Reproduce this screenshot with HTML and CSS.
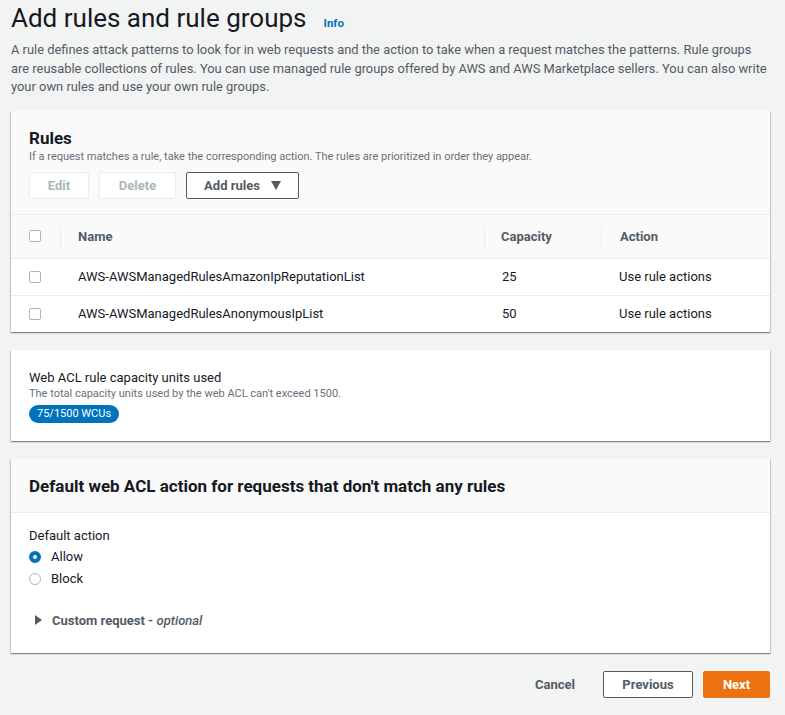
FILE: index.html
```html
<!DOCTYPE html>
<html>
<head>
<meta charset="utf-8">
<link rel="stylesheet" href="styles.css">
</head>
<body>
<main class="page">
  <div class="page-head">
    <h1 class="title">Add rules and rule groups</h1>
    <a class="info">Info</a>
  </div>
  <p class="desc">A rule defines attack patterns to look for in web requests and the action to take when a request matches the patterns. Rule groups<br>are reusable collections of rules. You can use managed rule groups offered by AWS and AWS Marketplace sellers. You can also write<br>your own rules and use your own rule groups.</p>

  <section class="panel rules">
    <div class="rules-head">
      <h2 class="h2">Rules</h2>
      <div class="sub">If a request matches a rule, take the corresponding action. The rules are prioritized in order they appear.</div>
      <div class="actions">
        <button class="btn disabled edit">Edit</button>
        <button class="btn disabled delete">Delete</button>
        <button class="btn normal add">Add rules <span class="tri"></span></button>
      </div>
    </div>
    <div class="table">
      <div class="tr thead">
        <div class="cell chk"><span class="checkbox"></span></div>
        <div class="cell th">Name</div>
        <div class="cell th">Capacity</div>
        <div class="cell th">Action</div>
      </div>
      <div class="tr">
        <div class="cell chk"><span class="checkbox"></span></div>
        <div class="cell">AWS-AWSManagedRulesAmazonIpReputationList</div>
        <div class="cell">25</div>
        <div class="cell">Use rule actions</div>
      </div>
      <div class="tr">
        <div class="cell chk"><span class="checkbox"></span></div>
        <div class="cell">AWS-AWSManagedRulesAnonymousIpList</div>
        <div class="cell">50</div>
        <div class="cell">Use rule actions</div>
      </div>
    </div>
  </section>

  <section class="panel wcu">
    <div class="label">Web ACL rule capacity units used</div>
    <div class="sub">The total capacity units used by the web ACL can't exceed 1500.</div>
    <span class="badge">75/1500 WCUs</span>
  </section>

  <section class="panel default">
    <div class="default-head">
      <h2 class="h2">Default web ACL action for requests that don't match any rules</h2>
    </div>
    <div class="default-body">
      <div class="label">Default action</div>
      <div class="radios">
        <label class="radio"><span class="dot on"></span>Allow</label>
        <label class="radio"><span class="dot"></span>Block</label>
      </div>
      <div class="expander"><span class="caret"></span><span>Custom request - <i>optional</i></span></div>
    </div>
  </section>

  <div class="footer">
    <button class="link-btn">Cancel</button>
    <button class="btn normal prev">Previous</button>
    <button class="btn primary next">Next</button>
  </div>
</main>
</body>
</html>
```

FILE: styles.css
```css
* { box-sizing: border-box; }
html, body { margin: 0; padding: 0; }
body {
  background: #f2f3f3;
  font-family: Roboto, "Noto Sans", sans-serif;
  color: #16191f;
  font-size: 13px;
}
.page {
  padding: 0 15px 0 11px;
}
.page-head {
  display: flex;
  align-items: baseline;
  gap: 17px;
  height: 36px;
  padding-top: 2px;
}
.title {
  margin: 0;
  font-size: 26px;
  font-weight: 400;
  line-height: 32px;
  color: #16191f;
}
.info {
  color: #0073bb;
  font-size: 11.5px;
  font-weight: 700;
}
.desc {
  margin: 5px -10px 0 0;
  color: #545b64;
  font-size: 12.9px;
  line-height: 18.5px;
  white-space: nowrap;
}
.panel {
  background: #fff;
  box-shadow: 0 1px 1px 0 rgba(0,28,36,.3), 1px 1px 1px 0 rgba(0,28,36,.15), -1px 1px 1px 0 rgba(0,28,36,.15);
}
.rules { margin-top: 14px; }
.rules-head {
  background: #fafafa;
  padding: 16px 18px 15px 18px;
  border-bottom: 1px solid #eaeded;
}
.h2 {
  margin: 0;
  font-size: 17px;
  font-weight: 700;
  line-height: 22px;
}
.sub {
  color: #687078;
  font-size: 11px;
  line-height: 15px;
}
.actions {
  display: flex;
  gap: 10px;
  margin-top: 8px;
}
.btn {
  font-family: inherit;
  font-size: 13px;
  font-weight: 700;
  height: 27px;
  padding: 0 18px;
  background: #fff;
  border: 1px solid #545b64;
  border-radius: 2px;
  color: #545b64;
  line-height: 25px;
}
.btn.disabled {
  border-color: #eaeded;
  color: #aab7b8;
}
.edit { width: 60px; padding: 0; }
.delete { width: 77px; padding: 0; }
.add { width: 113px; padding: 0; display: inline-flex; align-items: center; justify-content: center; gap: 11px; }
.tri {
  width: 0; height: 0;
  border-left: 5px solid transparent;
  border-right: 5px solid transparent;
  border-top: 9px solid #545b64;
}
.table { font-size: 13px; }
.tr {
  display: grid;
  grid-template-columns: 49px 424px 117px 1fr;
  height: 37px;
  align-items: center;
  border-top: 1px solid #eaeded;
}
.tr.thead {
  height: 43px;
  background: #fafafa;
  border-top: none;
}
.tr:not(.thead) .cell:not(.chk) { padding-left: 18px; }
.cell { white-space: nowrap; }
.th {
  position: relative;
  font-weight: 700;
  color: #545b64;
  padding-left: 18px;
}
.th::before {
  content: "";
  position: absolute;
  left: 0;
  top: -3px;
  width: 1px;
  height: 22px;
  background: #eaeded;
}
.tr.thead .th:nth-child(3) { padding-left: 17px; }
.tr.thead .th:nth-child(4) { padding-left: 19px; }
.chk { padding-left: 18px; display: flex; align-items: center; }
.checkbox {
  display: block;
  width: 12px;
  height: 12px;
  border: 1px solid #aab7b8;
  border-radius: 2px;
  background: #fff;
}
.wcu {
  margin-top: 18px;
  padding: 19px 18px 18px;
}
.label {
  font-size: 13px;
  line-height: 17px;
  color: #16191f;
}
.badge {
  display: inline-block;
  margin-top: 4px;
  background: #0073bb;
  color: #fff;
  font-size: 11px;
  line-height: 18px;
  height: 18px;
  padding: 0 8px;
  border-radius: 9px;
}
.default { margin-top: 18px; }
.default-head {
  background: #fafafa;
  padding: 16px 18px 15px;
  border-bottom: 1px solid #eaeded;
}
.default-body {
  padding: 14px 18px 25px;
}
.radios {
  margin-top: 4px;
  display: flex;
  flex-direction: column;
  gap: 4px;
}
.radio {
  display: flex;
  align-items: center;
  gap: 10px;
  height: 18px;
  line-height: 18px;
}
.dot {
  width: 12px;
  height: 12px;
  border-radius: 50%;
  border: 1px solid #aab7b8;
  background: #fff;
}
.dot.on {
  border: 4px solid #0073bb;
  background: #fff;
}
.expander {
  margin-top: 25px;
  display: flex;
  align-items: center;
  gap: 10px;
  font-weight: 700;
  color: #545b64;
  padding-left: 6px;
}
.expander i { font-weight: 500; }
.caret {
  width: 0; height: 0;
  border-top: 5px solid transparent;
  border-bottom: 5px solid transparent;
  border-left: 7px solid #545b64;
}
.footer {
  display: flex;
  justify-content: flex-end;
  align-items: center;
  gap: 10px;
  margin-top: 18px;
}
.link-btn {
  font-family: inherit;
  font-size: 13px;
  font-weight: 700;
  color: #545b64;
  background: none;
  border: none;
  padding: 0 18px;
}
.prev { width: 90px; padding: 0; }
.next {
  width: 67px;
  padding: 0;
  background: #ec7211;
  border-color: #ec7211;
  color: #fff;
}
```
